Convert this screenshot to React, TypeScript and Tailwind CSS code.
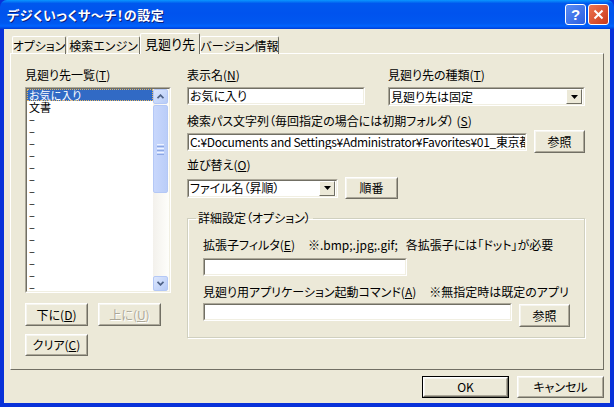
import React from "react";

const font = "font-['Noto_Sans_CJK_JP','Noto_Sans_CJK_SC',sans-serif] [font-feature-settings:'palt']";

function U({ children }: { children: React.ReactNode }) {
  return <span className="underline underline-offset-[1px]">{children}</span>;
}

function Sunken({ className, children }: { className: string; children?: React.ReactNode }) {
  return (
    <div className={`border border-t-[#ACA899] border-l-[#ACA899] border-r-white border-b-white ${className}`}>
      <div className="h-full border border-t-[#716F64] border-l-[#716F64] border-r-[#F1EFE2] border-b-[#F1EFE2] bg-white flex items-center overflow-hidden">
        {children}
      </div>
    </div>
  );
}

function Btn({
  className,
  children,
  disabled,
  def,
}: {
  className: string;
  children: React.ReactNode;
  disabled?: boolean;
  def?: boolean;
}) {
  const inner = (
    <div className="h-full border border-t-white border-l-white border-r-[#716F64] border-b-[#716F64]">
      <div
        className={`h-full flex items-center justify-center border border-t-[#F6F5EF] border-l-[#F6F5EF] border-r-[#ACA899] border-b-[#ACA899] bg-[#ECE9D8] leading-none whitespace-nowrap ${
          disabled ? "text-[#ACA899] [text-shadow:1px_1px_0_#fff]" : "text-black"
        }`}
      >
        {children}
      </div>
    </div>
  );
  if (def) return <div className={`border border-black ${className}`}>{inner}</div>;
  return <div className={className}>{inner}</div>;
}

function DropArrow() {
  return (
    <div className="w-[16px] h-[15px] mr-[1px] border border-t-white border-l-white border-r-[#716F64] border-b-[#716F64] bg-[#ECE9D8] flex items-center justify-center shrink-0">
      <svg width="7" height="4" viewBox="0 0 7 4">
        <path d="M0 0h7L3.5 4z" fill="#000" />
      </svg>
    </div>
  );
}

function ScrollArrow({ up }: { up?: boolean }) {
  return (
    <div className="w-[15px] h-[15px] rounded-[2px] border border-[#B4C8F6] bg-gradient-to-br from-[#DDE7FD] to-[#B6CBF7] flex items-center justify-center">
      <svg width="7" height="5" viewBox="0 0 7 5">
        <path d={up ? "M0.5 4.2L3.5 1.2L6.5 4.2" : "M0.5 0.8L3.5 3.8L6.5 0.8"} stroke="#4D6185" strokeWidth="1.8" fill="none" />
      </svg>
    </div>
  );
}

function Tab({ w, children }: { w: string; children: React.ReactNode }) {
  return (
    <div
      className={`${w} h-[18px] border border-b-0 border-t-white border-l-white border-r-[#716F64] rounded-t-[2px] flex items-center justify-center leading-none whitespace-nowrap`}
    >
      {children}
    </div>
  );
}

export default function App() {
  const items = ["お気に入り", "文書", ...Array.from({ length: 15 }, () => "–")];
  return (
    <div className={`w-[614px] h-[407px] bg-[#0831D9] flex flex-col text-[12px] text-black ${font}`}>
      {/* title bar */}
      <div className="h-[29px] shrink-0 rounded-t-[7px] bg-[linear-gradient(to_bottom,#0A97FF_0%,#0058EE_12%,#0053EE_45%,#0058F0_80%,#0064FF_90%,#003DD7_100%)] flex items-center pl-[7px] pr-[5px]">
        <span className="text-white font-bold text-[13px] leading-none [text-shadow:1px_1px_0_#0A1E7A] tracking-[0.5px]">
          デジくいっくサ～チ！の設定
        </span>
        <div className="ml-auto flex gap-[2px]">
          <div className="w-[21px] h-[21px] rounded-[3px] border border-white bg-[linear-gradient(135deg,#5A8CF3,#2A5FE0)] flex items-center justify-center">
            <span className="text-white font-bold text-[15px] leading-none font-['Liberation_Sans',sans-serif]">?</span>
          </div>
          <div className="w-[21px] h-[21px] rounded-[3px] border border-white bg-[linear-gradient(135deg,#EE7552,#C9391A)] flex items-center justify-center">
            <svg width="11" height="11" viewBox="0 0 11 11">
              <path d="M1.5 1.5L9.5 9.5M9.5 1.5L1.5 9.5" stroke="#fff" strokeWidth="2" />
            </svg>
          </div>
        </div>
      </div>

      {/* dialog body */}
      <div className="flex-1 mx-[4px] mb-[4px] bg-[#ECE9D8] flex flex-col pl-[6px] pr-[6px] pt-[4px]">
        {/* tabs */}
        <div className="h-[21px] flex items-end relative z-10 -mb-[1px] pl-[2px]">
          <Tab w="w-[54px]">オプション</Tab>
          <div className="ml-[1px]">
            <Tab w="w-[73px]">検索エンジン</Tab>
          </div>
          <div className="w-[60px] h-[21px] border border-b-0 border-t-white border-l-white border-r-[#716F64] rounded-t-[2px] bg-[#ECE9D8] flex items-start justify-center pt-[3px] leading-none text-[13px] whitespace-nowrap">
            見廻り先
          </div>
          <Tab w="w-[79px]">バージョン情報</Tab>
        </div>

        {/* tab page */}
        <div className="h-[317px] shrink-0 border border-t-white border-l-white border-r-[#716F64] border-b-[#716F64] flex pl-[14px] pt-[14px]">
          {/* list column */}
          <div className="w-[146px] flex flex-col">
            <div className="leading-[14px] h-[14px]">
              見廻り先一覧(<U>T</U>)
            </div>
            <div className="mt-[5px] h-[206px] border border-t-[#ACA899] border-l-[#ACA899] border-r-white border-b-white">
              <div className="h-full border border-t-[#716F64] border-l-[#716F64] border-r-[#F1EFE2] border-b-[#F1EFE2] bg-white flex">
                <div className="flex-1 flex flex-col text-[11px]">
                  {items.map((t, i) => (
                    <div
                      key={i}
                      className={`h-[12px] leading-[12px] pl-[2px] ${
                        i === 0 ? "bg-[#316AC5] text-white outline outline-1 outline-dotted outline-[#E8B860] -outline-offset-1" : ""
                      }`}
                    >
                      {t}
                    </div>
                  ))}
                </div>
                <div className="w-[16px] flex flex-col bg-[linear-gradient(to_right,#F3F1EC,#FEFEFB)]">
                  <ScrollArrow up />
                  <div className="mt-[1px] h-[88px] w-[15px] rounded-[2px] border border-[#B4C8F6] bg-[linear-gradient(to_right,#C8D7FC,#BACDF8)] flex flex-col items-center justify-center gap-[1px]">
                    <div className="w-[7px] h-[1px] bg-[#EEF3FF]" />
                    <div className="w-[7px] h-[1px] bg-[#8CA7E4]" />
                    <div className="w-[7px] h-[1px] bg-[#EEF3FF]" />
                    <div className="w-[7px] h-[1px] bg-[#8CA7E4]" />
                    <div className="w-[7px] h-[1px] bg-[#EEF3FF]" />
                    <div className="w-[7px] h-[1px] bg-[#8CA7E4]" />
                  </div>
                  <div className="flex-1" />
                  <ScrollArrow />
                </div>
              </div>
            </div>
            <div className="mt-[10px] flex gap-[10px]">
              <Btn className="w-[63px] h-[23px]">
                下に(<U>D</U>)
              </Btn>
              <Btn className="w-[63px] h-[23px]" disabled>
                上に(<U>U</U>)
              </Btn>
            </div>
            <Btn className="mt-[8px] w-[63px] h-[22px]">
              クリア(<U>C</U>)
            </Btn>
          </div>

          {/* settings column */}
          <div className="ml-[16px] w-[398px] flex flex-col">
            <div className="flex gap-[23px]">
              <div className="w-[178px] flex flex-col">
                <div className="leading-[14px] h-[14px]">
                  表示名(<U>N</U>)
                </div>
                <Sunken className="mt-[5px] h-[18px]">
                  <span className="pl-[1px] leading-none">お気に入り</span>
                </Sunken>
              </div>
              <div className="w-[197px] flex flex-col">
                <div className="leading-[14px] h-[14px]">
                  見廻り先の種類(<U>T</U>)
                </div>
                <Sunken className="mt-[5px] h-[19px]">
                  <span className="pl-[1px] leading-none flex-1">見廻り先は固定</span>
                  <DropArrow />
                </Sunken>
              </div>
            </div>

            <div className="mt-[8px] leading-[14px] h-[14px] whitespace-nowrap">
              検索パス文字列（毎回指定の場合には初期フォルダ） (<U>S</U>)
            </div>
            <div className="mt-[2px] h-[23px] flex items-center gap-[7px]">
              <Sunken className="w-[340px] h-[18px]">
                <span className="pl-[1px] leading-none whitespace-nowrap tracking-[-0.3px]">
                  C:¥Documents and Settings¥Administrator¥Favorites¥01_東京都関係
                </span>
              </Sunken>
              <Btn className="w-[51px] h-[23px]">参照</Btn>
            </div>

            <div className="mt-[5px] leading-[14px] h-[14px]">
              並び替え(<U>O</U>)
            </div>
            <div className="mt-[5px] h-[22px] flex items-center gap-[7px]">
              <Sunken className="w-[151px] h-[19px]">
                <span className="pl-[1px] leading-none flex-1">ファイル名（昇順）</span>
                <DropArrow />
              </Sunken>
              <Btn className="w-[53px] h-[22px]">順番</Btn>
            </div>

            <fieldset className="mt-[12px] h-[127px] border border-[#D0D0BF] shadow-[1px_1px_0_#fff,inset_1px_1px_0_#fff] pl-[15px]">
              <legend className="ml-[-7px] px-[2px] leading-[14px]">詳細設定（オプション）</legend>
              <div className="mt-[13px] leading-[14px] h-[14px] whitespace-nowrap">
                拡張子フィルタ(<U>E</U>)<span className="ml-[13px]">※.bmp;.jpg;.gif;</span>
                <span className="ml-[8px]">各拡張子には「ドット」が必要</span>
              </div>
              <Sunken className="mt-[6px] w-[204px] h-[18px]" />
              <div className="mt-[9px] leading-[14px] h-[14px] whitespace-nowrap">
                見廻り用アプリケーション起動コマンド(<U>A</U>)<span className="ml-[13px]">※無指定時は既定のアプリ</span>
              </div>
              <div className="mt-[4px] flex items-start gap-[7px]">
                <Sunken className="w-[309px] h-[18px]" />
                <Btn className="mt-[1px] w-[51px] h-[23px]">参照</Btn>
              </div>
            </fieldset>
          </div>
        </div>

        {/* dialog buttons */}
        <div className="mt-[6px] flex justify-end gap-[8px]">
          <Btn className="w-[87px] h-[22px]" def>
            OK
          </Btn>
          <Btn className="w-[87px] h-[22px]">キャンセル</Btn>
        </div>
      </div>
    </div>
  );
}
